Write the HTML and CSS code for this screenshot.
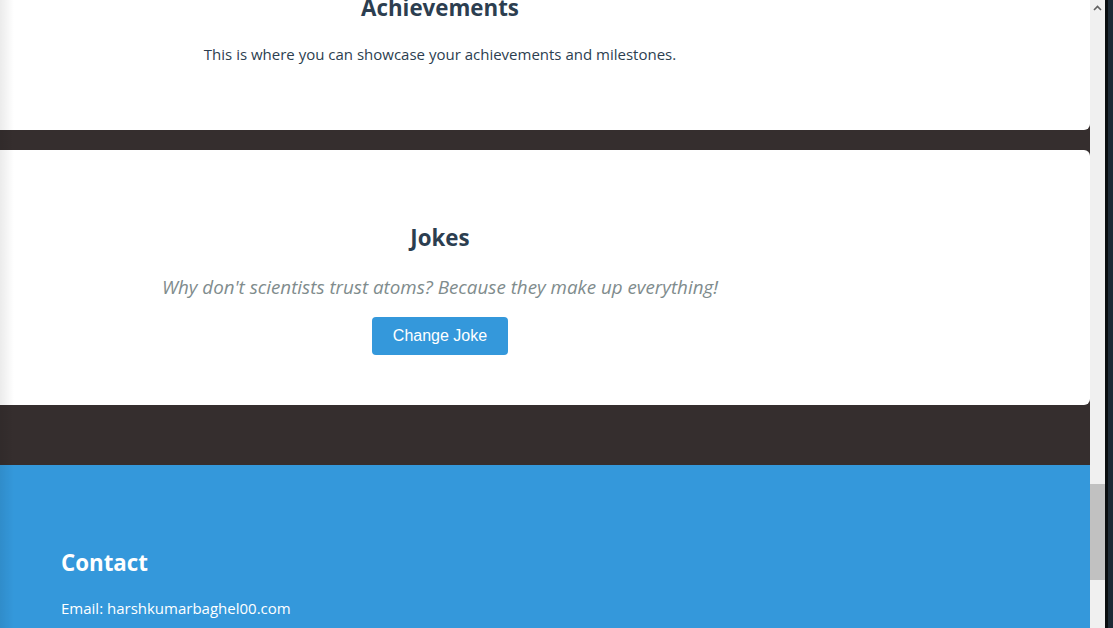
FILE: index.html
```html
<!DOCTYPE html>
<html lang="en">
<head>
<meta charset="utf-8">
<title>Portfolio</title>
<link rel="stylesheet" href="styles.css">
</head>
<body>
  <div class="page">
    <section class="card card-achievements">
      <div class="card-inner">
        <h2 class="card-title">Achievements</h2>
        <p class="card-text">This is where you can showcase your achievements and milestones.</p>
      </div>
    </section>
    <section class="card card-jokes">
      <div class="card-inner">
        <h2 class="card-title">Jokes</h2>
        <p class="joke-text">Why don't scientists trust atoms? Because they make up everything!</p>
        <button class="joke-btn" type="button">Change Joke</button>
      </div>
    </section>
    <footer class="contact">
      <h2 class="contact-title">Contact</h2>
      <p class="contact-text">Email: harshkumarbaghel00.com</p>
    </footer>
  </div>
  <div class="scrollbar">
    <div class="scroll-up">
      <svg width="9" height="6" viewBox="0 0 9 6"><path d="M1 5 L4.5 1.5 L8 5" fill="none" stroke="#606060" stroke-width="1.6"/></svg>
    </div>
    <div class="scroll-track">
      <div class="scroll-thumb"></div>
    </div>
  </div>
  <div class="edge">
    <div class="edge-dark"></div>
    <div class="edge-blue"></div>
  </div>
</body>
</html>
```

FILE: styles.css
```css
html, body {
  margin: 0;
  padding: 0;
  height: 628px;
  overflow: hidden;
}

body {
  display: flex;
  font-family: "Open Sans", "Noto Sans", sans-serif;
  background: #0a0e10;
}

.page {
  position: relative;
  width: 1090px;
  flex: 0 0 1090px;
  height: 628px;
  overflow: hidden;
  background: #352e2e;
  display: flex;
  flex-direction: column;
}

.page::before {
  content: "";
  position: absolute;
  left: 0;
  top: 0;
  bottom: 0;
  width: 14px;
  background: linear-gradient(to right, rgba(0, 0, 0, 0.08), rgba(0, 0, 0, 0));
  pointer-events: none;
  z-index: 2;
}

.card {
  background: #ffffff;
  border-radius: 0 6px 6px 0;
  padding-right: 210px;
  text-align: center;
  color: #2c3e50;
  flex: 0 0 auto;
}

.card-inner {
  display: flex;
  flex-direction: column;
  align-items: center;
}

.card-title {
  margin: 0;
  font-size: 22.3px;
  line-height: 30px;
  font-weight: 700;
  color: #2c3e50;
}

.card-achievements {
  margin-top: -7px;
  padding-bottom: 64px;
}

.card-achievements .card-text {
  margin: 19px 0 0;
  font-size: 15px;
  line-height: 24px;
  color: #2c3e50;
}

.card-jokes {
  margin-top: 20px;
  padding-top: 73px;
  padding-bottom: 50px;
}

.joke-text {
  margin: 21px 0 0;
  font-size: 18.8px;
  line-height: 26px;
  font-style: italic;
  color: #7f8c8d;
}

.joke-btn {
  margin-top: 17px;
  padding: 10px 21px;
  border: none;
  border-radius: 4px;
  background: #3498db;
  color: #ffffff;
  font-family: "Liberation Sans", Arial, sans-serif;
  font-size: 16px;
  line-height: 18px;
  cursor: pointer;
}

.contact {
  margin-top: 60px;
  flex: 1 0 auto;
  background: #3498db;
  padding: 83px 61px 0;
  color: #ffffff;
}

.contact-title {
  margin: 0;
  font-size: 22.3px;
  line-height: 30px;
  font-weight: 700;
}

.contact-text {
  margin: 18px 0 0;
  font-size: 15px;
  line-height: 24px;
}

.scrollbar {
  flex: 0 0 15px;
  width: 15px;
  height: 628px;
  background: #f0f0f0;
  display: flex;
  flex-direction: column;
}

.scroll-up {
  height: 15px;
  display: flex;
  align-items: center;
  justify-content: center;
}

.scroll-track {
  flex: 1;
  padding-top: 469px;
}

.scroll-thumb {
  height: 96px;
  background: #c1c1c1;
}

.edge {
  flex: 0 0 8px;
  display: flex;
  height: 628px;
}

.edge-dark {
  width: 3px;
  background: #0a0e10;
}

.edge-blue {
  flex: 1;
  background: #1d2a35;
}
```
